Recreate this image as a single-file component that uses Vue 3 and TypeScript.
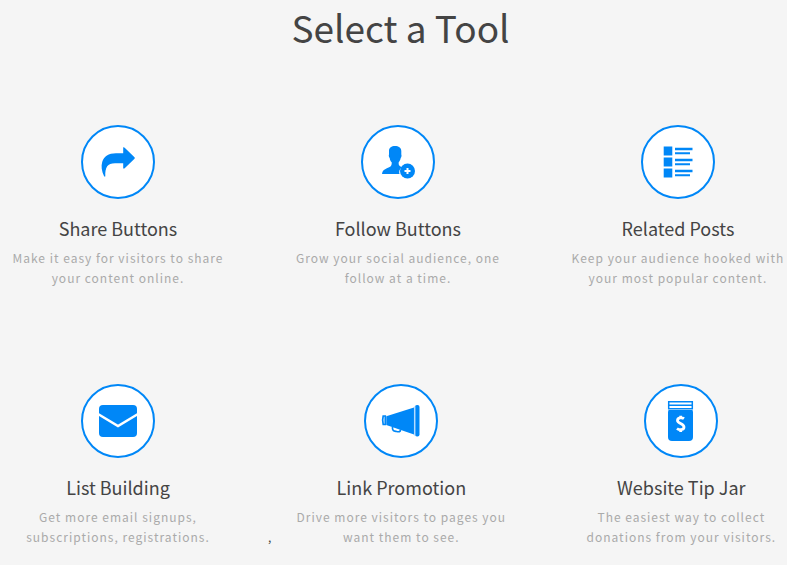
<script setup lang="ts">
interface Tool {
  id: string
  title: string
  text: string
}

const rows: Tool[][] = [
  [
    { id: 'share', title: 'Share Buttons', text: 'Make it easy for visitors to share your content online.' },
    { id: 'follow', title: 'Follow Buttons', text: 'Grow your social audience, one follow at a time.' },
    { id: 'related', title: 'Related Posts', text: 'Keep your audience hooked with your most popular content.' },
  ],
  [
    { id: 'list', title: 'List Building', text: 'Get more email signups, subscriptions, registrations.' },
    { id: 'promo', title: 'Link Promotion', text: 'Drive more visitors to pages you want them to see.' },
    { id: 'jar', title: 'Website Tip Jar', text: 'The easiest way to collect donations from your visitors.' },
  ],
]
</script>

<template>
  <main class="page">
    <h1 class="heading">Select a Tool</h1>
    <div v-for="(row, r) in rows" :key="r" class="row">
      <template v-for="(tool, i) in row" :key="tool.id">
        <section class="tool">
          <div class="badge">
            <svg class="icon" viewBox="0 0 74 74" aria-hidden="true">
              <path v-if="tool.id === 'share'" d="M42.2 22.3Q43 22 43.7 22.7L53.5 32.3Q54.2 33 53.5 33.7L43.7 43.2Q43 43.8 42.2 43.4V38.2H34C26.5 38.2 24 42 24.3 51.5H23.2C20.5 46 20 41 21.2 37C23 31 27.5 28.2 35 28.2H42.2Z" />
              <template v-else-if="tool.id === 'follow'">
                <path d="M34 21C37.5 21 40.3 22.5 40.3 26V29.5C40.8 30 40.5 32.5 39.7 33C39.3 35 38.5 36.5 37.7 37.3C37.5 40 38 41 41 42.3C38.3 44.3 37.7 46.5 38.5 49H21C21.3 46.5 22.3 44.8 25 43.7C29 42 31 41.5 30.7 37.3C29.5 36.5 29 35 28.7 33C27.9 32.5 27.5 30 28 29.5V26C28 22.5 30.5 21 34 21Z" />
                <circle cx="46.5" cy="46" r="7.5" />
                <path class="cut" d="M46.5 43V49M43.5 46H49.5" stroke-width="2" />
              </template>
              <path v-else-if="tool.id === 'related'" d="M22.7 21.5h8.6v9h-8.6zM22.7 32.5h8.6v9h-8.6zM22.7 43.5h8.6v9h-8.6zM34 22.8h17.5v2.4H34zM34 27.2h15v2H34zM34 33.8h17.5v2.4H34zM34 38.2h15v2H34zM34 44.8h17.5v2.4H34zM34 49.2h15v2H34z" />
              <template v-else-if="tool.id === 'list'">
                <rect x="18" y="21" width="38" height="32" rx="4" />
                <path class="cut" d="M17 30L37 42L57 30" stroke-width="2.5" />
              </template>
              <template v-else-if="tool.id === 'promo'">
                <path d="M22.3 32.2L50 23.5V50.5L22.3 41Z" />
                <path class="line" d="M21.3 32H19.2Q18 36.5 19.2 40.5H21.3ZM28.5 43C28 47 30 47 32.5 47.5C35 48 36.5 48 36.5 45.5" stroke-width="1.7" />
                <rect x="51" y="21" width="4.5" height="31.5" rx="2" />
                <path class="seam" d="M50.7 22.5V51.5" />
              </template>
              <template v-else>
                <path d="M24.5 26H48.5L49 28V53Q49 57 45 57H28Q24 57 24 53V28Z" />
                <path class="lid" d="M24.7 17.7H48.3V24.7H24.7ZM24.7 21.3H48.3" />
                <path class="dollar" d="M40 34.7C38 33.2 33.5 33.5 33.5 36.5C33.5 39.5 40 39.5 40 43C40 46 35.5 46.5 33 44.5M36.7 31.8V35M36.7 44.5V48" />
              </template>
            </svg>
          </div>
          <h2 class="title">{{ tool.title }}</h2>
          <p class="text">{{ tool.text }}</p>
        </section>
        <span v-if="r === 1 && i === 0" class="comma">,</span>
      </template>
    </div>
  </main>
</template>

<style>
body {
  margin: 0;
  background: #f5f5f5;
}
</style>

<style scoped>
.page {
  overflow-x: clip;
  font-family: "Noto Sans CJK SC", "Noto Sans", sans-serif;
  color: #444;
}
.heading {
  margin: 0;
  padding: 0 0 71px 14px;
  font-size: 37px;
  font-weight: 400;
  line-height: 54px;
  text-align: center;
}
.row {
  display: flex;
  align-items: flex-end;
  margin: 0 -41px 96px -12px;
}
.row:last-child {
  margin-bottom: 16px;
}
.tool {
  flex: 0 0 calc(100% / 3);
  box-sizing: border-box;
  padding: 0 40px 0 20px;
  text-align: center;
}
.badge {
  box-sizing: border-box;
  width: 74px;
  height: 74px;
  margin: 0 auto;
  border: 2px solid #0087f7;
  border-radius: 50%;
  background: #fff;
}
.icon {
  display: block;
  width: 74px;
  height: 74px;
  margin: -2px;
  fill: #0087f7;
}
.cut,
.line,
.lid,
.dollar,
.seam {
  fill: none;
  stroke: #fff;
}
.line {
  stroke: #0087f7;
}
.seam {
  stroke: #b5dcff;
  stroke-width: 1.5;
}
.lid {
  stroke: #0087f7;
  stroke-width: 1.5;
}
.dollar {
  stroke-width: 2.8;
}
.title {
  margin: 17px 0 7px;
  font-size: 18px;
  font-weight: 400;
  line-height: 25px;
}
.text {
  margin: 0;
  font-size: 12px;
  letter-spacing: 1px;
  line-height: 20px;
  color: #aaa;
}
.comma {
  font-size: 12px;
  line-height: 20px;
}
</style>
